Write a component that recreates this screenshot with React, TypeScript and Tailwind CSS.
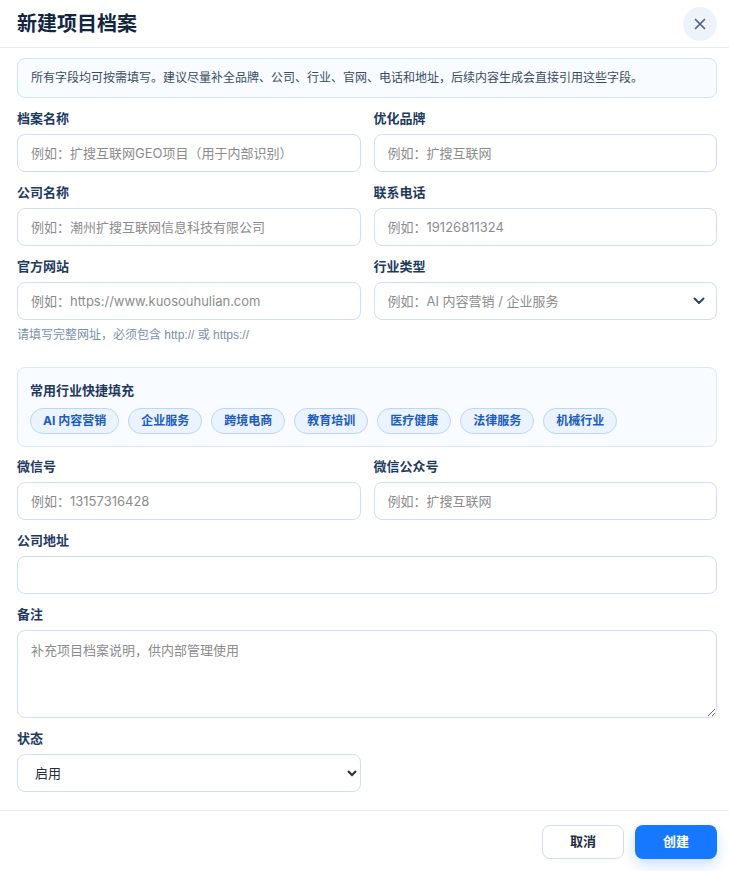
import React from "react";

const font = { fontFamily: 'Inter, "Noto Sans CJK SC", sans-serif' };

const inputCls =
  "h-[38px] w-full rounded-[8px] border border-[#cfdef0] bg-white px-[13px] text-[13px] text-[#1f2d3d] placeholder:text-[#8c8c8c] outline-none";

function Label({ children }: { children: React.ReactNode }) {
  return (
    <div className="h-[18px] text-[13px] font-bold leading-[18px] text-[#1e3a5f]">
      {children}
    </div>
  );
}

function Field({
  label,
  placeholder,
  children,
}: {
  label: string;
  placeholder?: string;
  children?: React.ReactNode;
}) {
  return (
    <div className="flex flex-col gap-[7px]">
      <Label>{label}</Label>
      {children ?? <input className={inputCls} placeholder={placeholder} />}
    </div>
  );
}

const industries = ["AI 内容营销", "企业服务", "跨境电商", "教育培训", "医疗健康", "法律服务", "机械行业"];

export default function App() {
  return (
    <div className="flex min-h-[871px] w-full flex-col bg-white" style={font}>
      {/* header */}
      <div className="flex h-[48px] items-center justify-between border-b border-[#e8eef7] pl-[17px] pr-[12px]">
        <h1 className="text-[20px] font-bold leading-none text-[#10253f]">新建项目档案</h1>
        <button className="flex h-[34px] w-[34px] items-center justify-center rounded-full bg-[#eef3fb] text-[#4d6280]">
          <svg width="12" height="12" viewBox="0 0 12 12" fill="none" stroke="currentColor" strokeWidth="1.7" strokeLinecap="round">
            <path d="M1.5 1.5l9 9M10.5 1.5l-9 9" />
          </svg>
        </button>
      </div>

      {/* body */}
      <div className="flex flex-col pb-[18px] pl-[17px] pr-[12px] pt-[10px]">
        <div className="flex h-[40px] items-center rounded-[8px] border border-[#d3e2f5] bg-[#f8fbff] px-[13px] text-[12px] text-[#3a4c63]">
          所有字段均可按需填写。建议尽量补全品牌、公司、行业、官网、电话和地址，后续内容生成会直接引用这些字段。
        </div>

        <div className="mt-[11px] grid grid-cols-2 gap-x-[13px] gap-y-[11px]">
          <Field label="档案名称" placeholder="例如：扩搜互联网GEO项目（用于内部识别）" />
          <Field label="优化品牌" placeholder="例如：扩搜互联网" />
          <Field label="公司名称" placeholder="例如：潮州扩搜互联网信息科技有限公司" />
          <Field label="联系电话" placeholder="例如：19126811324" />
          <div className="flex flex-col">
            <Field label="官方网站" placeholder="例如：https://www.kuosouhulian.com" />
            <div
              className="mt-[7px] text-[12px] leading-[16px] text-[#7890ad]"
              style={{ fontFamily: '"Liberation Sans", "Noto Sans CJK SC", sans-serif' }}
            >
              请填写完整网址，必须包含 http:// 或 https://
            </div>
          </div>
          <Field label="行业类型">
            <div className="relative">
              <input className={inputCls + " pr-[36px]"} placeholder="例如：AI 内容营销 / 企业服务" />
              <svg
                className="pointer-events-none absolute right-[12px] top-1/2 -translate-y-1/2 text-[#2a4565]"
                width="12"
                height="8"
                viewBox="0 0 12 8"
                fill="none"
                stroke="currentColor"
                strokeWidth="2"
                strokeLinecap="round"
                strokeLinejoin="round"
              >
                <path d="M1.5 1.5L6 6l4.5-4.5" />
              </svg>
            </div>
          </Field>
        </div>

        {/* quick industry fill */}
        <div className="mt-[24px] flex flex-col gap-[9px] rounded-[8px] border border-[#dce8f6] bg-[#f8fbff] px-[12px] pb-[12px] pt-[13px]">
          <div className="h-[18px] text-[13px] font-bold leading-[18px] text-[#1e3a5f]">常用行业快捷填充</div>
          <div className="flex flex-wrap gap-[9px]">
            {industries.map((t) => (
              <button
                key={t}
                className="flex h-[26px] items-center rounded-full border border-[#bcd7f6] bg-[#eaf3ff] px-[12px] text-[12px] font-bold text-[#1d5cbf]"
              >
                {t}
              </button>
            ))}
          </div>
        </div>

        <div className="mt-[10px] grid grid-cols-2 gap-x-[13px] gap-y-[11px]">
          <Field label="微信号" placeholder="例如：13157316428" />
          <Field label="微信公众号" placeholder="例如：扩搜互联网" />
          <div className="col-span-2">
            <Field label="公司地址" placeholder="" />
          </div>
          <div className="col-span-2">
            <Field label="备注">
              <textarea
                className="h-[88px] w-full rounded-[8px] border border-[#cfdef0] bg-white px-[13px] py-[10px] text-[13px] text-[#1f2d3d] placeholder:text-[#8c8c8c] outline-none"
                placeholder="补充项目档案说明，供内部管理使用"
              />
            </Field>
          </div>
          <Field label="状态">
            <select className="h-[38px] w-full rounded-[8px] border border-[#cfdef0] bg-white pl-[13px] pr-[6px] text-[13px] text-[#1f2d3d] outline-none">
              <option>启用</option>
              <option>停用</option>
            </select>
          </Field>
        </div>
      </div>

      {/* footer */}
      <div className="flex justify-end gap-[11px] border-t border-[#e8eef7] px-[12px] pb-[13px] pt-[14px]">
        <button className="h-[34px] w-[82px] rounded-[8px] border border-[#cfdef0] bg-white text-[13px] font-bold text-[#1e2d40]">
          取消
        </button>
        <button className="h-[34px] w-[82px] rounded-[8px] bg-[#1677ff] text-[13px] font-bold text-white shadow-[0_6px_14px_rgba(22,119,255,0.22)]">
          创建
        </button>
      </div>
    </div>
  );
}
